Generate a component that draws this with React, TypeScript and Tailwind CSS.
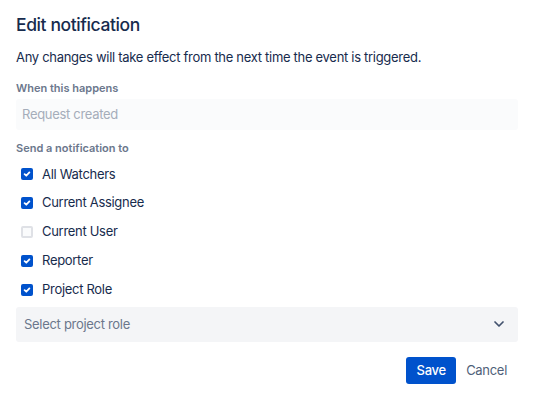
import { ChevronDown } from "lucide-react";

const recipients = [
  { label: "All Watchers", checked: true },
  { label: "Current Assignee", checked: true },
  { label: "Current User", checked: false },
  { label: "Reporter", checked: true },
  { label: "Project Role", checked: true },
];

function Check({ checked }: { checked: boolean }) {
  if (!checked) {
    return <span className="w-[12px] h-[12px] rounded-[2px] border-2 border-[#DFE1E6] bg-[#FAFBFC]" />;
  }
  return (
    <span className="w-[12px] h-[12px] rounded-[2px] bg-[#0052CC] flex items-center justify-center">
      <svg width="8" height="8" viewBox="0 0 8 8" fill="none">
        <path d="M1.6 4.1 L3.3 5.7 L6.4 2.4" stroke="white" strokeWidth="1.8" strokeLinecap="round" strokeLinejoin="round" />
      </svg>
    </span>
  );
}

export default function App() {
  return (
    <div
      className="w-[534px] h-[398px] bg-white px-4 pt-[13px] text-[#172B4D] text-[13px] tracking-[-0.3px]"
      style={{ fontFamily: "Inter, 'Noto Sans', sans-serif" }}
    >
      <h1 className="text-[17.5px] font-medium leading-6 tracking-[-0.4px]">Edit notification</h1>
      <p className="mt-[10px] leading-5">Any changes will take effect from the next time the event is triggered.</p>

      <div className="mt-[13px]">
        <div className="text-[11px] font-semibold text-[#6B778C] leading-4 tracking-normal">When this happens</div>
        <div className="mt-[3px] h-[31px] rounded-[3px] bg-[#FAFBFC] flex items-center px-[6px] text-[#A5ADBA]">
          Request created
        </div>
      </div>

      <div className="mt-[10px]">
        <div className="text-[11px] font-semibold text-[#6B778C] leading-4 tracking-normal">Send a notification to</div>
        <div className="mt-[4px] flex flex-col">
          {recipients.map((r) => (
            <div key={r.label} className="h-[28.8px] flex items-center pl-[5px] gap-[9px]">
              <Check checked={r.checked} />
              <span>{r.label}</span>
            </div>
          ))}
        </div>
      </div>

      <div className="mt-[3px] h-[35px] rounded-[3px] bg-[#F4F5F7] flex items-center justify-between pl-[8px] pr-[11px] text-[#6B778C]">
        <span>Select project role</span>
        <ChevronDown size={16} strokeWidth={2.6} className="text-[#42526E]" />
      </div>

      <div className="mt-[15px] flex justify-end items-center gap-[2px]">
        <button className="h-[27px] w-[50px] rounded-[3px] bg-[#0052CC] text-white font-medium">Save</button>
        <button className="h-[27px] pl-[8px] pr-[11px] rounded-[3px] text-[#505F79]">Cancel</button>
      </div>
    </div>
  );
}
